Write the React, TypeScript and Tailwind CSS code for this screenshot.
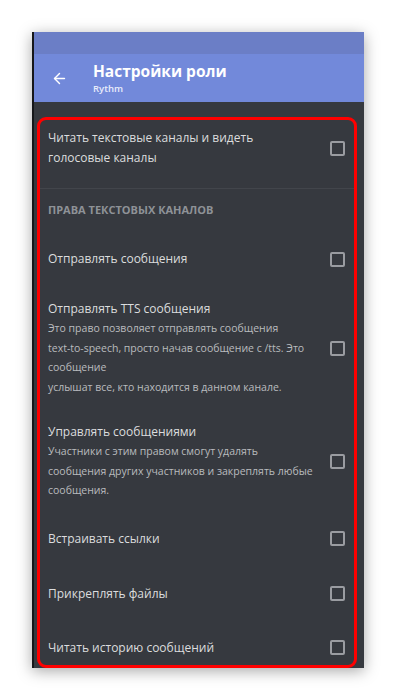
import { ArrowLeft } from 'lucide-react';

const Checkbox = () => (
    <div className="w-[15px] h-[15px] shrink-0 rounded-[2px] border-2 border-[#9a9ca1]" />
);

const Row = ({ title, desc, className }: { title: string; desc?: string[]; className: string }) => (
    <div className={`flex items-center pl-[8px] pr-[9px] ${className}`}>
        <div className="flex-1 pr-2 whitespace-nowrap">
            <div className="text-[12px] leading-[20px] text-[#dcddde]">{title}</div>
            {desc && (
                <div className="text-[10.5px] leading-[19.5px] text-[#b9bbbe]">
                    {desc.map((d) => (
                        <div key={d}>{d}</div>
                    ))}
                </div>
            )}
        </div>
        <Checkbox />
    </div>
);

const App = () => {
    return (
        <div className="w-[396px] h-[700px] bg-white pt-[32px] pl-[32px]" style={{ fontFamily: '"Open Sans", "Noto Sans", sans-serif' }}>
            <div className="w-[332px] h-[636px] bg-[#36393f] border-l-2 border-[#16171a] shadow-[0_3px_14px_rgba(0,0,0,0.35)] flex flex-col overflow-hidden">
                {/* status bar */}
                <div className="h-[22px] shrink-0 bg-[#6b7ec6]" />
                {/* header */}
                <div className="h-[48px] shrink-0 bg-[#7289da] flex items-center">
                    <ArrowLeft className="w-[17px] h-[17px] text-white ml-[17px]" strokeWidth={2} />
                    <div className="ml-[25px]">
                        <div className="text-[15.5px] leading-[21px] font-bold text-white">Настройки роли</div>
                        <div className="text-[9.5px] leading-[13px] font-semibold text-[#e8ecfa]">Rythm</div>
                    </div>
                </div>

                <div className="mt-[15px] ml-[3px] mr-[7px] shrink-0 border-[3px] border-[#ff0000] rounded-[9px] flex flex-col">
                    <div className="flex items-center pl-[8px] pr-[9px] pt-[8px] pb-[20px] border-b border-[#42454b]">
                        <div className="flex-1 pr-2 text-[12px] leading-[20px] text-[#dcddde]">
                            Читать текстовые каналы и видеть
                            <br />
                            голосовые каналы
                        </div>
                        <Checkbox />
                    </div>
                    <div className="pl-[8px] pt-[13px] pb-[16px] text-[11px] leading-[16px] font-bold text-[#8e9297] uppercase">
                        Права текстовых каналов
                    </div>
                    <Row title="Отправлять сообщения" className="pt-[15px] pb-[15px]" />
                    <Row
                        title="Отправлять TTS сообщения"
                        desc={[
                            'Это право позволяет отправлять сообщения',
                            'text-to-speech, просто начав сообщение с /tts. Это',
                            'сообщение',
                            'услышат все, кто находится в данном канале.',
                        ]}
                        className="pt-[15px] pb-[13px]"
                    />
                    <Row
                        title="Управлять сообщениями"
                        desc={[
                            'Участники с этим правом смогут удалять',
                            'сообщения других участников и закреплять любые',
                            'сообщения.',
                        ]}
                        className="pt-[12px] pb-[13px]"
                    />
                    <Row title="Встраивать ссылки" className="pt-[15px] pb-[17px]" />
                    <Row title="Прикреплять файлы" className="pt-[18px] pb-[17px]" />
                    <Row title="Читать историю сообщений" className="pt-[17px] pb-[7px]" />
                </div>
            </div>
        </div>
    );
};

export default App;
